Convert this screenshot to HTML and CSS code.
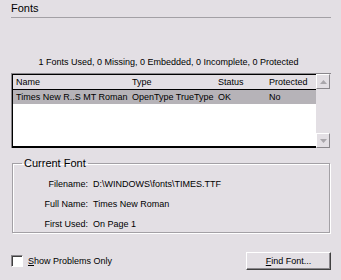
FILE: index.html
```html
<!DOCTYPE html>
<html>
<head>
<meta charset="utf-8">
<link rel="stylesheet" href="styles.css">
</head>
<body>
<div class="dlg">
  <div class="title">Fonts</div>
  <div class="rule"></div>
  <div class="summary">1 Fonts Used, 0 Missing, 0 Embedded, 0 Incomplete, 0 Protected</div>
  <div class="list">
    <div class="list-main">
      <div class="row hdr"><span>Name</span><span>Type</span><span>Status</span><span>Protected</span></div>
      <div class="row sel"><span>Times New R..S MT Roman</span><span>OpenType TrueType</span><span>OK</span><span>No</span></div>
      <div class="empty"></div>
    </div>
    <div class="scroll">
      <div class="sbtn"><svg width="7" height="4" viewBox="0 0 7 4"><path d="M3.5 0 L7 4 L0 4 Z" fill="#a9a6ab"/></svg></div>
      <div class="track"></div>
      <div class="sbtn"><svg width="7" height="4" viewBox="0 0 7 4"><path d="M0 0 L7 0 L3.5 4 Z" fill="#a9a6ab"/></svg></div>
    </div>
  </div>
  <fieldset class="group">
    <legend>Current Font</legend>
    <div class="info">
      <span class="lbl">Filename:</span><span class="val">D:\WINDOWS\fonts\TIMES.TTF</span>
      <span class="lbl">Full Name:</span><span class="val">Times New Roman</span>
      <span class="lbl">First Used:</span><span class="val">On Page 1</span>
    </div>
  </fieldset>
  <div class="footer">
    <label class="chk"><span class="box"></span><span><u>S</u>how Problems Only</span></label>
    <div class="button"><u>F</u>ind Font...</div>
  </div>
</div>
</body>
</html>
```
FILE: styles.css
```css
html, body {
  margin: 0;
  padding: 0;
  background: #e3dfe4;
}
.dlg {
  width: 341px;
  height: 280px;
  font-family: "Liberation Sans", Arial, sans-serif;
  font-size: 9px;
  color: #000;
  display: flex;
  flex-direction: column;
}
.title {
  height: 17px;
  padding-left: 11px;
  font-size: 11px;
  line-height: 17px;
}
.rule {
  margin-left: 11px;
  width: 320px;
  border-top: 1px solid #a3a0a5;
}
.summary {
  margin-top: 38px;
  height: 12px;
  line-height: 12px;
  text-align: center;
  padding-right: 4px;
}
.list {
  margin: 5px 0 0 11px;
  width: 320px;
  height: 75px;
  display: flex;
  border-top: 1px solid #8a878c;
  border-left: 1px solid #8a878c;
  box-sizing: border-box;
}
.list-main {
  flex: 1;
  display: flex;
  flex-direction: column;
  border-top: 1px solid #000;
  border-left: 1px solid #000;
  border-bottom: 2px solid #000;
}
.row {
  display: grid;
  grid-template-columns: 116px 86px 51px 1fr;
  height: 14px;
  line-height: 14px;
  white-space: nowrap;
  overflow: hidden;
}
.row span {
  padding-left: 3px;
  overflow: hidden;
}
.hdr {
  background: #e3dfe4;
  border-bottom: 1px solid #000;
}
.sel {
  background: #b6b3b8;
}
.empty {
  flex: 1;
  background: #fff;
}
.scroll {
  width: 14px;
  display: flex;
  flex-direction: column;
  background: #e3dfe4;
  border-right: 1px solid #e3dfe4;
}
.sbtn {
  height: 15px;
  box-sizing: border-box;
  border-top: 1px solid #fff;
  border-left: 1px solid #fff;
  border-right: 1px solid #8a878c;
  border-bottom: 1px solid #8a878c;
  display: flex;
  align-items: center;
  justify-content: center;
}
.track {
  flex: 1;
}
.group {
  margin: 9px 0 0 12px;
  width: 318px;
  height: 76px;
  box-sizing: border-box;
  padding: 0;
  border: 1px solid #a3a0a5;
  box-shadow: inset 1px 1px 0 #fff, 1px 1px 0 #fff;
}
.group legend {
  margin-left: 9px;
  padding: 0 2px;
  font-size: 11px;
  line-height: 12px;
}
.info {
  display: grid;
  grid-template-columns: 75px 1fr;
  column-gap: 5px;
  row-gap: 8px;
  margin-top: 9px;
  line-height: 12px;
}
.lbl {
  text-align: right;
}
.footer {
  margin: 19px 10px 0 11px;
  display: flex;
  justify-content: space-between;
  align-items: center;
}
.chk {
  display: flex;
  align-items: center;
  gap: 5px;
}
.box {
  width: 12px;
  height: 12px;
  box-sizing: border-box;
  background: #fff;
  border-top: 1px solid #8a878c;
  border-left: 1px solid #8a878c;
  border-right: 1px solid #fff;
  border-bottom: 1px solid #fff;
  box-shadow: inset 1px 1px 0 #404040;
}
.button {
  width: 85px;
  height: 18px;
  box-sizing: border-box;
  border-top: 1px solid #fff;
  border-left: 1px solid #fff;
  border-right: 1px solid #404040;
  border-bottom: 1px solid #404040;
  box-shadow: inset -1px -1px 0 #8a878c;
  text-align: center;
  line-height: 16px;
}
```
